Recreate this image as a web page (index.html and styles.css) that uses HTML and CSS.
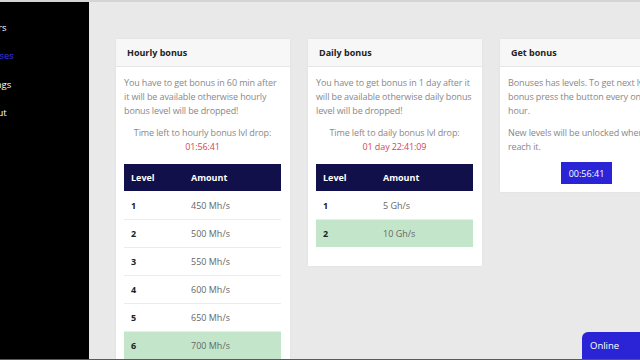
FILE: index.html
```html
<!DOCTYPE html>
<html lang="en">
<head>
    <meta charset="UTF-8">
    <meta name="viewport" content="width=device-width, initial-scale=1.0">
    <title>Bonuses</title>
    <link rel="stylesheet" href="styles.css">
</head>
<body>
    <div id="layout">
        <nav id="sidebar">
            <a class="nav-link" href="#">Miners</a>
            <a class="nav-link active" href="#">Bonuses</a>
            <a class="nav-link" href="#">Settings</a>
            <a class="nav-link" href="#">Logout</a>
        </nav>

        <main id="content">
            <div class="card">
                <div class="card-header">Hourly bonus</div>
                <div class="card-body">
                    <p>You have to get bonus in 60 min after it will be available otherwise hourly bonus level will be dropped!</p>
                    <p class="timer">Time left to hourly bonus lvl drop:<br><span class="countdown">01:56:41</span></p>
                    <table class="levels">
                        <tr><th class="col-level">Level</th><th>Amount</th></tr>
                        <tr><td class="lvl">1</td><td>450 Mh/s</td></tr>
                        <tr><td class="lvl">2</td><td>500 Mh/s</td></tr>
                        <tr><td class="lvl">3</td><td>550 Mh/s</td></tr>
                        <tr><td class="lvl">4</td><td>600 Mh/s</td></tr>
                        <tr><td class="lvl">5</td><td>650 Mh/s</td></tr>
                        <tr class="current"><td class="lvl">6</td><td>700 Mh/s</td></tr>
                        <tr><td class="lvl">7</td><td>750 Mh/s</td></tr>
                    </table>
                </div>
            </div>

            <div class="card">
                <div class="card-header">Daily bonus</div>
                <div class="card-body">
                    <p>You have to get bonus in 1 day after it will be available otherwise daily bonus level will be dropped!</p>
                    <p class="timer">Time left to daily bonus lvl drop:<br><span class="countdown">01 day 22:41:09</span></p>
                    <table class="levels">
                        <tr><th class="col-level">Level</th><th>Amount</th></tr>
                        <tr><td class="lvl">1</td><td>5 Gh/s</td></tr>
                        <tr class="current"><td class="lvl">2</td><td>10 Gh/s</td></tr>
                    </table>
                </div>
            </div>

            <div class="card">
                <div class="card-header">Get bonus</div>
                <div class="card-body">
                    <p>Bonuses has levels. To get next lvl of bonus press the button every one hour.</p>
                    <p class="last">New levels will be unlocked when you reach it.</p>
                    <div class="btn-row">
                        <button class="bonus-button" disabled>00:56:41</button>
                    </div>
                </div>
            </div>
        </main>
    </div>

    <!-- chat widget -->
    <div id="online-tab">Online</div>
    <div id="bottom-edge"></div>
</body>
</html>
```

FILE: styles.css
```css
html, body {
    margin: 0;
    height: 100%;
    overflow: hidden;
}
body {
    font-family: "Open Sans", "Noto Sans", sans-serif;
    font-size: 9px;
    color: #888;
    background-color: #e9e9e9;
}
#layout {
    display: flex;
    height: 100%;
    border-top: 2px solid #d4d4d4;
    box-sizing: border-box;
}
#sidebar {
    width: 89px;
    flex-shrink: 0;
    background-color: #000;
    display: flex;
    flex-direction: column;
    padding-top: 19px;
    overflow: hidden;
}
.nav-link {
    display: block;
    margin-left: -24px;
    height: 28.3px;
    line-height: 14px;
    color: #fff;
    font-size: 9.5px;
    text-decoration: none;
}
.nav-link.active {
    color: #3b34e6;
}
#content {
    flex: 1;
    display: flex;
    align-items: flex-start;
    gap: 18px;
    padding: 37px 0 0 27px;
    overflow: hidden;
}
.card {
    width: 174px;
    flex-shrink: 0;
    background-color: #fff;
    box-shadow: 0 0 2px rgba(0, 0, 0, 0.06);
}
.card-header {
    height: 27px;
    line-height: 27px;
    padding: 0 11px;
    background-color: #f7f7f7;
    border-bottom: 1px solid #e6e6e6;
    color: #222;
    font-weight: 700;
    font-size: 9px;
}
.card-body {
    padding: 9px 9px 8px 8px;
}
.card-body p {
    margin: 0 0 7px 0;
    line-height: 14px;
    letter-spacing: -0.12px;
}
.card-body p.timer {
    text-align: center;
    margin-top: 8px;
    margin-bottom: 10px;
}
.card-body p.last {
    margin-top: 8px;
    margin-bottom: 8px;
}
.countdown {
    color: #d2465a;
}
.levels {
    width: 100%;
    border-collapse: collapse;
    margin-bottom: 11px;
}
.levels th {
    height: 27px;
    padding: 0 7px;
    text-align: left;
    background-color: #12104a;
    color: #fff;
    font-weight: 700;
}
.levels th.col-level {
    width: 46px;
}
.levels td {
    height: 27px;
    padding: 0 7px;
    border-top: 1px solid #ececec;
    color: #666;
}
.levels td.lvl {
    color: #222;
    font-weight: 700;
}
.levels tr:nth-child(2) td {
    border-top: none;
    height: 28px;
}
.levels tr.current td {
    background-color: #c3e6cb;
}
.btn-row {
    display: flex;
    justify-content: center;
}
.bonus-button {
    height: 22px;
    padding: 0 8px;
    border: none;
    background-color: #2a24d6;
    color: #fff;
    font-family: inherit;
    font-size: 9px;
}
#online-tab {
    position: fixed;
    right: 0;
    bottom: 0;
    width: 58px;
    height: 28px;
    line-height: 28px;
    padding-left: 8px;
    box-sizing: border-box;
    background-color: #2a24d6;
    color: #fff;
    font-size: 9.5px;
    border-top-left-radius: 6px;
}
#bottom-edge {
    position: fixed;
    left: 0;
    right: 0;
    bottom: 0;
    height: 1px;
    background-color: #5a5a5a;
}
```
